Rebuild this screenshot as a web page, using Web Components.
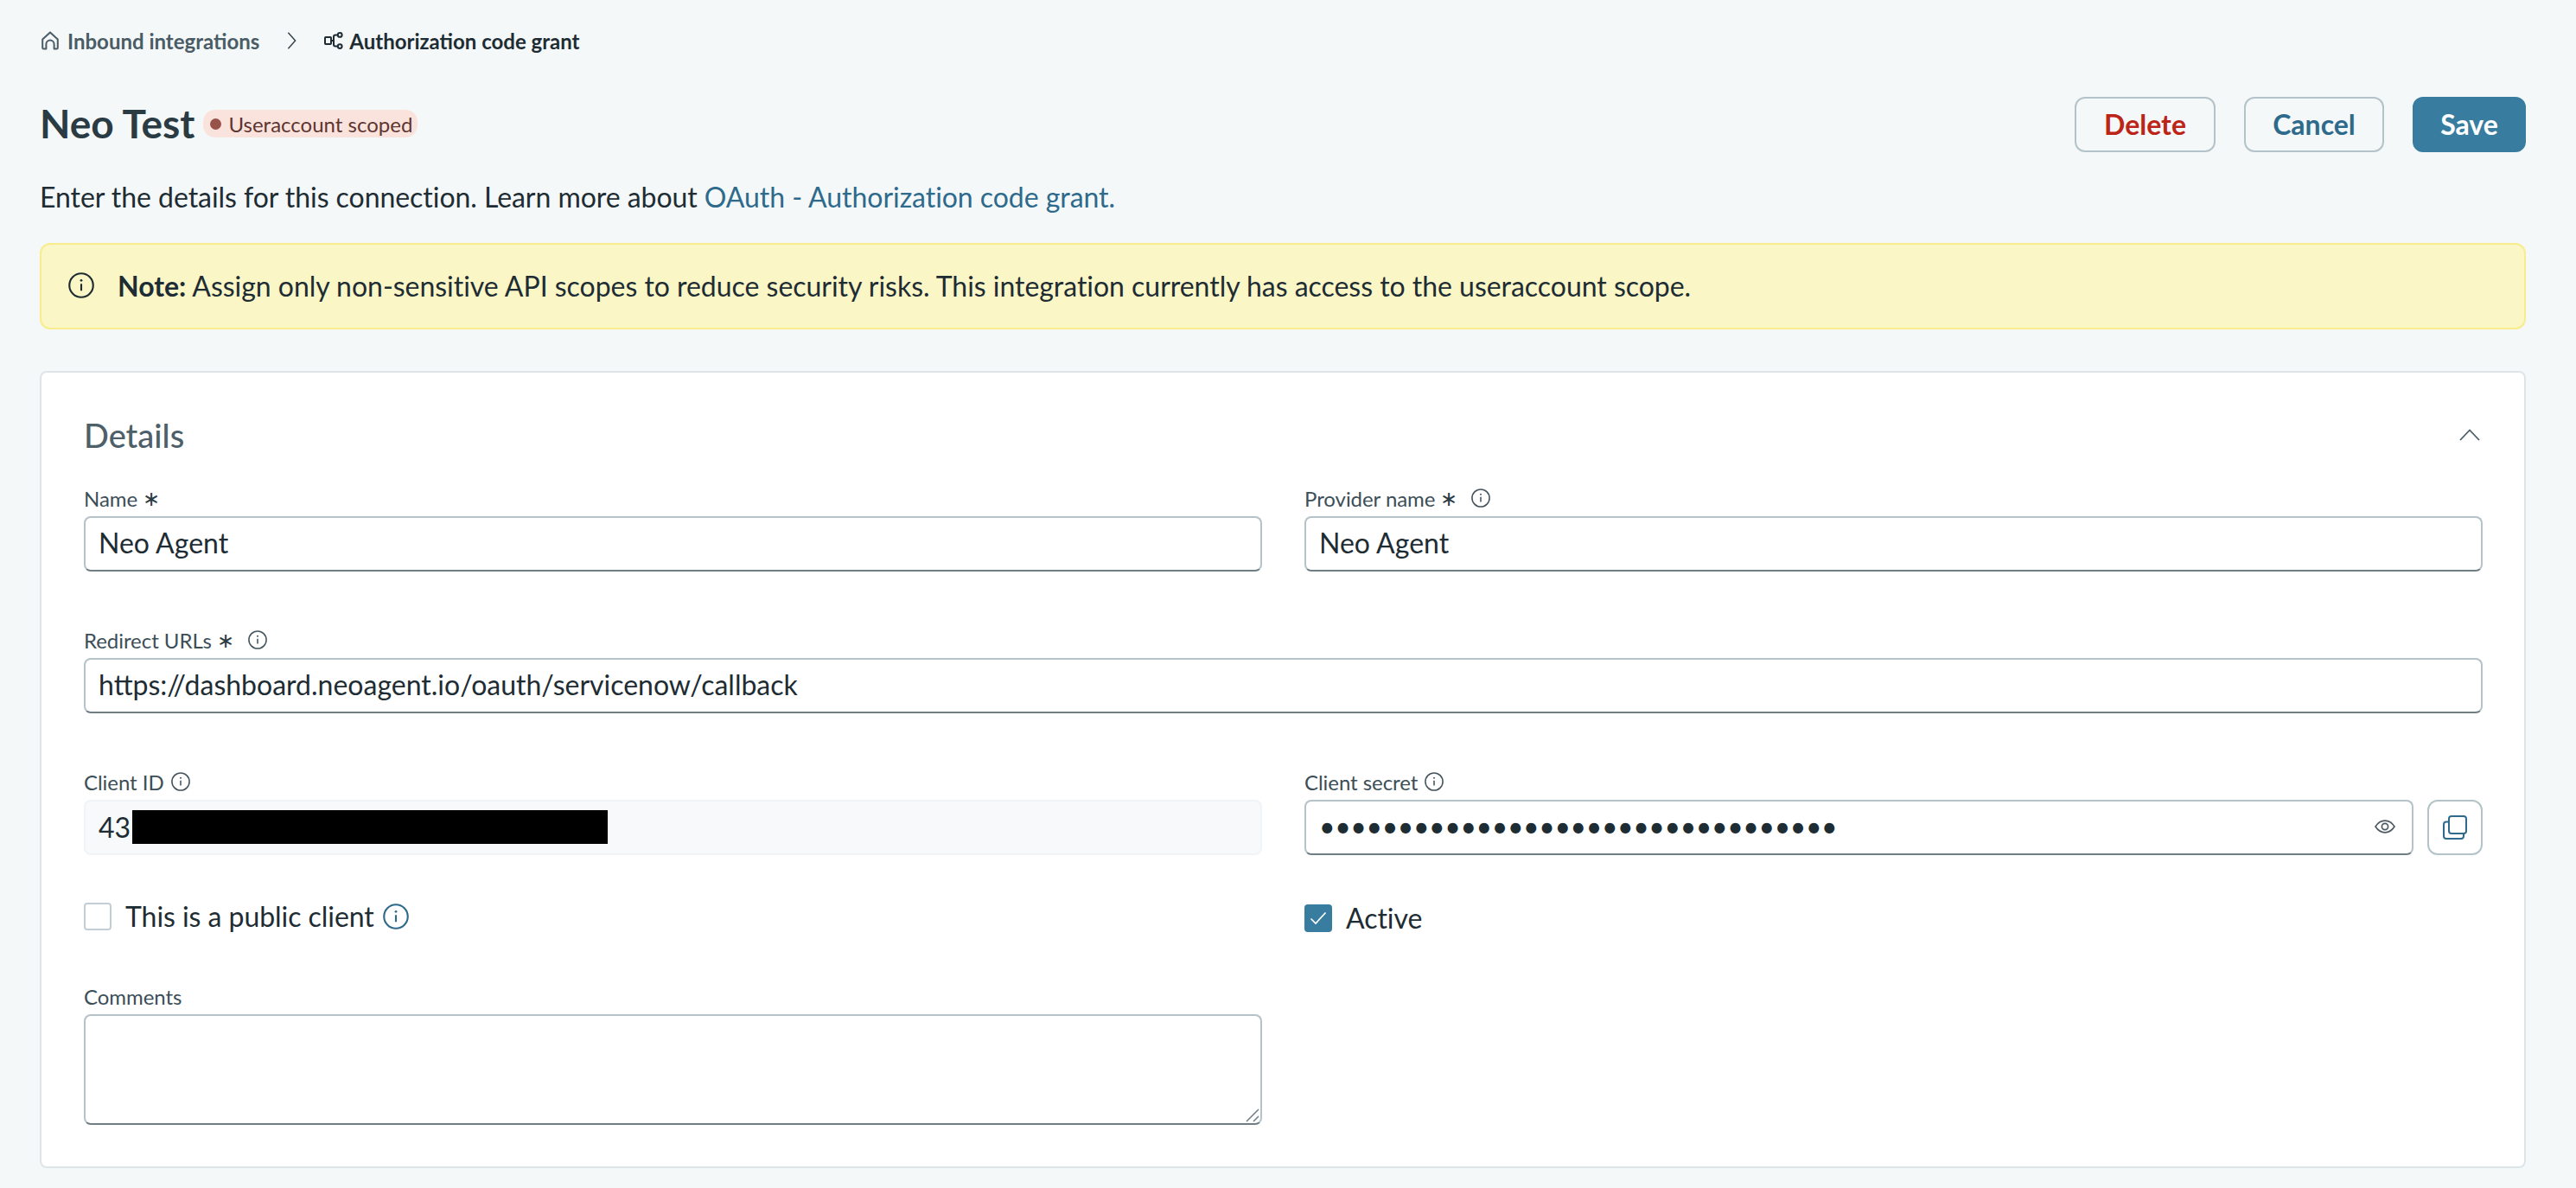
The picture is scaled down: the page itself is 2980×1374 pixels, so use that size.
<!DOCTYPE html>
<html lang="en">
<head>
<meta charset="utf-8">
<title>Authorization code grant</title>
<style>
  html, body { margin: 0; background: #f4f8f9; }
  body { font-family: Lato, "Open Sans", sans-serif; color: #1e2c33; }
</style>
</head>
<body>
<connection-page></connection-page>

<script>
const icons = {
  info: `<svg viewBox="0 0 24 24" fill="none" stroke="currentColor" stroke-width="1.7"><circle cx="12" cy="12" r="11"/><path d="M12 10.600v6.400"/><circle cx="12" cy="7.400" r="1.100" fill="currentColor" stroke="none"/></svg>`,
  home: `<svg viewBox="0 0 20 22" fill="none" stroke="currentColor" stroke-width="2" stroke-linejoin="round"><path d="M1.200 9.600 10 1.400l8.800 8.200v9.600a1.400 1.400 0 0 1-1.400 1.400h-2.800v-5.400a4.600 4.600 0 0 0-9.200 0v5.400H2.600a1.400 1.400 0 0 1-1.400-1.400z"/></svg>`,
  flow: `<svg viewBox="0 0 22 20" fill="none" stroke="currentColor" stroke-width="2"><rect x="1" y="6" width="7" height="8" rx=".8"/><circle cx="18.200" cy="3.400" r="2.400"/><circle cx="18.200" cy="16.600" r="2.400"/><path d="M8 10h3V5.400a2 2 0 0 1 2-2h2.800M11 10v4.600a2 2 0 0 0 2 2h2.800"/></svg>`,
  chevron: `<svg viewBox="0 0 12 24" fill="none" stroke="currentColor" stroke-width="1.6"><path d="M1.500 2 10.500 12 1.500 22"/></svg>`,
  up: `<svg viewBox="0 0 24 14" fill="none" stroke="currentColor" stroke-width="1.800"><path d="M1 13 12 1.500 23 13"/></svg>`,
  eye: `<svg viewBox="0 0 24 16" fill="none" stroke="currentColor" stroke-width="1.700"><path d="M1 8c3-4.600 6.500-6.800 11-6.800S20 3.400 23 8c-3 4.600-6.500 6.800-11 6.800S4 12.600 1 8z"/><circle cx="12" cy="8" r="3.600"/></svg>`,
  copy: `<svg viewBox="0 0 28 28" fill="none" stroke="currentColor" stroke-width="2"><rect x="7" y="1" width="20" height="20" rx="3"/><path d="M7 7.500H4a3 3 0 0 0-3 3V24a3 3 0 0 0 3 3h17a3 3 0 0 0 3-3v-3"/></svg>`,
  check: `<svg viewBox="0 0 20 16" fill="none" stroke="currentColor" stroke-width="1.700"><path d="M1.500 8.500 7 14 18.500 1.500"/></svg>`
};

function icon(name, w, h, extra = '') {
  return `<span style="display:inline-flex;flex:none;width:${w}px;height:${h}px;${extra}">${icons[name]}</span>`;
}

class AppBreadcrumb extends HTMLElement {
  connectedCallback() {
    this.attachShadow({ mode: 'open' });
    this.shadowRoot.innerHTML = `
      <style>
        :host { display: flex; align-items: center; height: 46px; font-size: 24px; font-weight: 700; }
        svg { width: 100%; height: 100%; }
        .item { display: flex; align-items: center; }
        .link { color: #4a5c65; }
        .current { color: #1e2c33; }
      </style>
      <div class="item link">${icon('home', 20, 22, 'margin-right:10px')}Inbound integrations</div>
      ${icon('chevron', 11, 22, 'margin:0 32px 0 32px;color:#33434b')}
      <div class="item current">${icon('flow', 22, 20, 'margin-right:7px')}Authorization code grant</div>
    `;
  }
}
customElements.define('app-breadcrumb', AppBreadcrumb);

class ScopeBadge extends HTMLElement {
  connectedCallback() {
    this.attachShadow({ mode: 'open' });
    this.shadowRoot.innerHTML = `
      <style>
        :host { display: inline-flex; align-items: center; height: 32px; padding: 0 6px 0 8px; gap: 8px; border-radius: 14px;
                background: #fbe3dd; color: #5e3530; font-size: 24px; }
        i { width: 13px; height: 13px; border-radius: 50%; background: #97534a; }
      </style>
      <i></i><slot></slot>
    `;
  }
}
customElements.define('scope-badge', ScopeBadge);

class ActionButton extends HTMLElement {
  connectedCallback() {
    this.attachShadow({ mode: 'open' });
    this.shadowRoot.innerHTML = `
      <style>
        :host { display: inline-flex; align-items: center; justify-content: center; box-sizing: border-box; height: 64px; padding-bottom: 2px;
                border: 2px solid #b4c3ca; border-radius: 12px; font-size: 32px; font-weight: 700; color: #2e6a8c; }
        :host([kind="danger"]) { color: #bd2418; width: 163px; }
        :host([kind="plain"]) { width: 162px; }
        :host([kind="primary"]) { background: #387ca0; border-color: #387ca0; color: #fff; width: 131px; }
      </style>
      <slot></slot>
    `;
  }
}
customElements.define('action-button', ActionButton);

class PageHeader extends HTMLElement {
  connectedCallback() {
    this.attachShadow({ mode: 'open' });
    this.shadowRoot.innerHTML = `
      <style>
        :host { display: flex; align-items: center; justify-content: space-between; height: 64px; }
        .title { display: flex; align-items: center; gap: 10px; padding-bottom: 2px; }
        h1 { margin: 0; font-size: 46px; line-height: 56px; font-weight: 700; color: #2a3b43; }
        .actions { display: flex; gap: 33px; }
      </style>
      <div class="title"><h1><slot name="title"></slot></h1><slot name="badge"></slot></div>
      <div class="actions"><slot name="actions"></slot></div>
    `;
  }
}
customElements.define('page-header', PageHeader);

class NoteBanner extends HTMLElement {
  connectedCallback() {
    this.attachShadow({ mode: 'open' });
    this.shadowRoot.innerHTML = `
      <style>
        :host { display: flex; align-items: center; box-sizing: border-box; height: 100px; padding: 0 0 2px 31px; gap: 27px;
                background: #faf6c6; border: 2px solid #f8ec8c; border-radius: 12px; font-size: 32px; letter-spacing: -.03px; color: #1e2c33; }
        svg { width: 100%; height: 100%; }
      </style>
      ${icon('info', 30, 30)}
      <div><slot></slot></div>
    `;
  }
}
customElements.define('note-banner', NoteBanner);

class DetailsCard extends HTMLElement {
  connectedCallback() {
    this.attachShadow({ mode: 'open' });
    this.shadowRoot.innerHTML = `
      <style>
        :host { display: block; box-sizing: border-box; background: #fff; border: 2px solid #dde5e9; border-radius: 8px; padding: 49px 48px 48px 49px; }
        header { display: flex; align-items: center; justify-content: space-between; box-sizing: border-box; height: 48px; margin-bottom: 33px; padding: 0 3px 2px 0; color: #4d5f68; }
        h2 { margin: 0; font-size: 38px; line-height: 46px; font-weight: 500; }
        svg { width: 100%; height: 100%; }
        .grid { display: grid; grid-template-columns: 1fr 1fr; column-gap: 49px; }
      </style>
      <header><h2><slot name="heading"></slot></h2>${icon('up', 24, 14)}</header>
      <div class="grid"><slot></slot></div>
    `;
  }
}
customElements.define('details-card', DetailsCard);

class FormField extends HTMLElement {
  connectedCallback() {
    const req = this.hasAttribute('required') ? '<span class="req">∗</span>' : '';
    const info = this.hasAttribute('info') ? icon('info', 22, 22, 'margin-left:' + (req ? 16 : 8) + 'px;color:#44555e') : '';
    this.attachShadow({ mode: 'open' });
    this.shadowRoot.innerHTML = `
      <style>
        :host { display: block; }
        :host([wide]) { grid-column: 1 / -1; }
        label { display: flex; align-items: center; box-sizing: border-box; height: 32px; padding-bottom: 2px; margin-bottom: 4px; font-size: 24px; letter-spacing: -.05px; color: #3c4e57; }
        .req { margin-left: 6px; font-size: 24px; color: #2c3c44; }
        svg { width: 100%; height: 100%; }
      </style>
      <label>${this.getAttribute('label')}${req}${info}</label>
      <slot></slot>
    `;
  }
}
customElements.define('form-field', FormField);

class TextBox extends HTMLElement {
  connectedCallback() {
    const multi = this.hasAttribute('multiline');
    this.attachShadow({ mode: 'open' });
    this.shadowRoot.innerHTML = `
      <style>
        :host { display: flex; align-items: center; box-sizing: border-box; height: 64px; padding: 0 16px 3px 15px;
                border: 2px solid #b4c3ca; border-bottom-color: #6f7d85; border-radius: 8px; background: #fff;
                font-size: 32px; color: #1e2c33; position: relative; }
        :host([readonly]) { background: #f7f9fa; border-color: #f1f4f6; padding-bottom: 2px; }
        :host([multiline]) { height: 128px; }
        .grip { position: absolute; right: 1px; bottom: 1px; width: 16px; height: 16px; }
        ::slotted([slot="end"]) { margin-left: auto; }
      </style>
      <slot></slot><slot name="end"></slot>
      ${multi ? '<svg class="grip" viewBox="0 0 16 16" fill="none" stroke="#6f7d85" stroke-width="1.500"><path d="M1 15 15 1M9 15l6-6"/></svg>' : ''}
    `;
  }
}
customElements.define('text-box', TextBox);

class IconGlyph extends HTMLElement {
  connectedCallback() {
    this.attachShadow({ mode: 'open' });
    const w = this.getAttribute('w'), h = this.getAttribute('h');
    this.shadowRoot.innerHTML = `
      <style>
        :host { display: inline-flex; width: ${w}px; height: ${h}px; flex: none; }
        svg { width: 100%; height: 100%; }
      </style>
      ${icons[this.getAttribute('name')]}
    `;
  }
}
customElements.define('icon-glyph', IconGlyph);

class CopyButton extends HTMLElement {
  connectedCallback() {
    this.attachShadow({ mode: 'open' });
    this.shadowRoot.innerHTML = `
      <style>
        :host { display: flex; align-items: center; justify-content: center; box-sizing: border-box; width: 64px; height: 64px; flex: none;
                border: 2px solid #b4c3ca; border-radius: 12px; color: #2e6a8c; }
        svg { width: 100%; height: 100%; }
      </style>
      ${icon('copy', 28, 28)}
    `;
  }
}
customElements.define('copy-button', CopyButton);

class CheckField extends HTMLElement {
  connectedCallback() {
    const on = this.hasAttribute('checked');
    const info = this.hasAttribute('info') ? icon('info', 30, 30, 'margin-left:10px;color:#2e6a8c') : '';
    this.attachShadow({ mode: 'open' });
    this.shadowRoot.innerHTML = `
      <style>
        :host { display: flex; align-items: center; height: 34px; font-size: 32px; letter-spacing: -.05px; color: #1e2c33; }
        .box { box-sizing: border-box; width: 32px; height: 32px; margin-right: 16px; border-radius: 4px; border: 2px solid #c3ced4; background: #fff;
               display: flex; align-items: center; justify-content: center; color: #fff; }
        :host([checked]) .box { background: #387ca0; border-color: #387ca0; }
        .txt { margin-top: -2px; }
        svg { width: 100%; height: 100%; }
      </style>
      <span class="box">${on ? icon('check', 20, 16) : ''}</span><span class="txt"><slot></slot></span>${info}
    `;
  }
}
customElements.define('check-field', CheckField);

class ConnectionPage extends HTMLElement {
  connectedCallback() {
    this.attachShadow({ mode: 'open' });
    this.shadowRoot.innerHTML = `
      <style>
        :host { display: block; padding: 24px 58px 23px 46px; }
        a { color: #2e6a8c; text-decoration: none; }
        page-header { margin: 42px 0 32px 0; }
        .lead { margin: 0 0 33px 0; font-size: 32px; line-height: 40px; letter-spacing: -.05px; color: #1e2c33; }
        app-breadcrumb { margin-left: 2px; }
        details-card { margin-top: 48px; }
        b { font-weight: 700; }
        .h { margin-top: 64px; }
        .check { margin-top: 56px; }
        .check-left { margin-top: 54px; }
        .comments { margin-top: 58px; }
        .redact { display: inline-block; width: 550px; height: 39px; background: #000; margin-left: 2px; }
        .secret-row { display: flex; gap: 16px; }
        .secret-row text-box { flex: 1; }
        .dots { letter-spacing: -.4px; }
      </style>
      <app-breadcrumb></app-breadcrumb>
      <page-header>
        <span slot="title">Neo Test</span>
        <scope-badge slot="badge">Useraccount scoped</scope-badge>
        <action-button slot="actions" kind="danger">Delete</action-button>
        <action-button slot="actions" kind="plain">Cancel</action-button>
        <action-button slot="actions" kind="primary">Save</action-button>
      </page-header>
      <p class="lead">Enter the details for this connection. Learn more about <a href="#">OAuth - Authorization code grant.</a></p>
      <note-banner><b>Note:</b> Assign only non-sensitive API scopes to reduce security risks. This integration currently has access to the useraccount scope.</note-banner>
      <details-card>
        <span slot="heading">Details</span>
        <form-field label="Name" required><text-box>Neo Agent</text-box></form-field>
        <form-field label="Provider name" required info><text-box>Neo Agent</text-box></form-field>
        <form-field class="h" label="Redirect URLs" required info wide><text-box>https://dashboard.neoagent.io/oauth/servicenow/callback</text-box></form-field>
        <form-field class="h" label="Client ID" info><text-box readonly>43<span class="redact"></span></text-box></form-field>
        <form-field class="h" label="Client secret" info>
          <div class="secret-row">
            <text-box><span class="dots">•••••••••••••••••••••••••••••••••</span><icon-glyph slot="end" name="eye" w="24" h="16" style="color:#4d5b63;margin-right:3px"></icon-glyph></text-box>
            <copy-button></copy-button>
          </div>
        </form-field>
        <check-field class="check-left" info>This is a public client</check-field>
        <check-field class="check" checked>Active</check-field>
        <form-field class="comments" label="Comments"><text-box multiline></text-box></form-field>
      </details-card>
    `;
  }
}
customElements.define('connection-page', ConnectionPage);
</script>
</body>
</html>
